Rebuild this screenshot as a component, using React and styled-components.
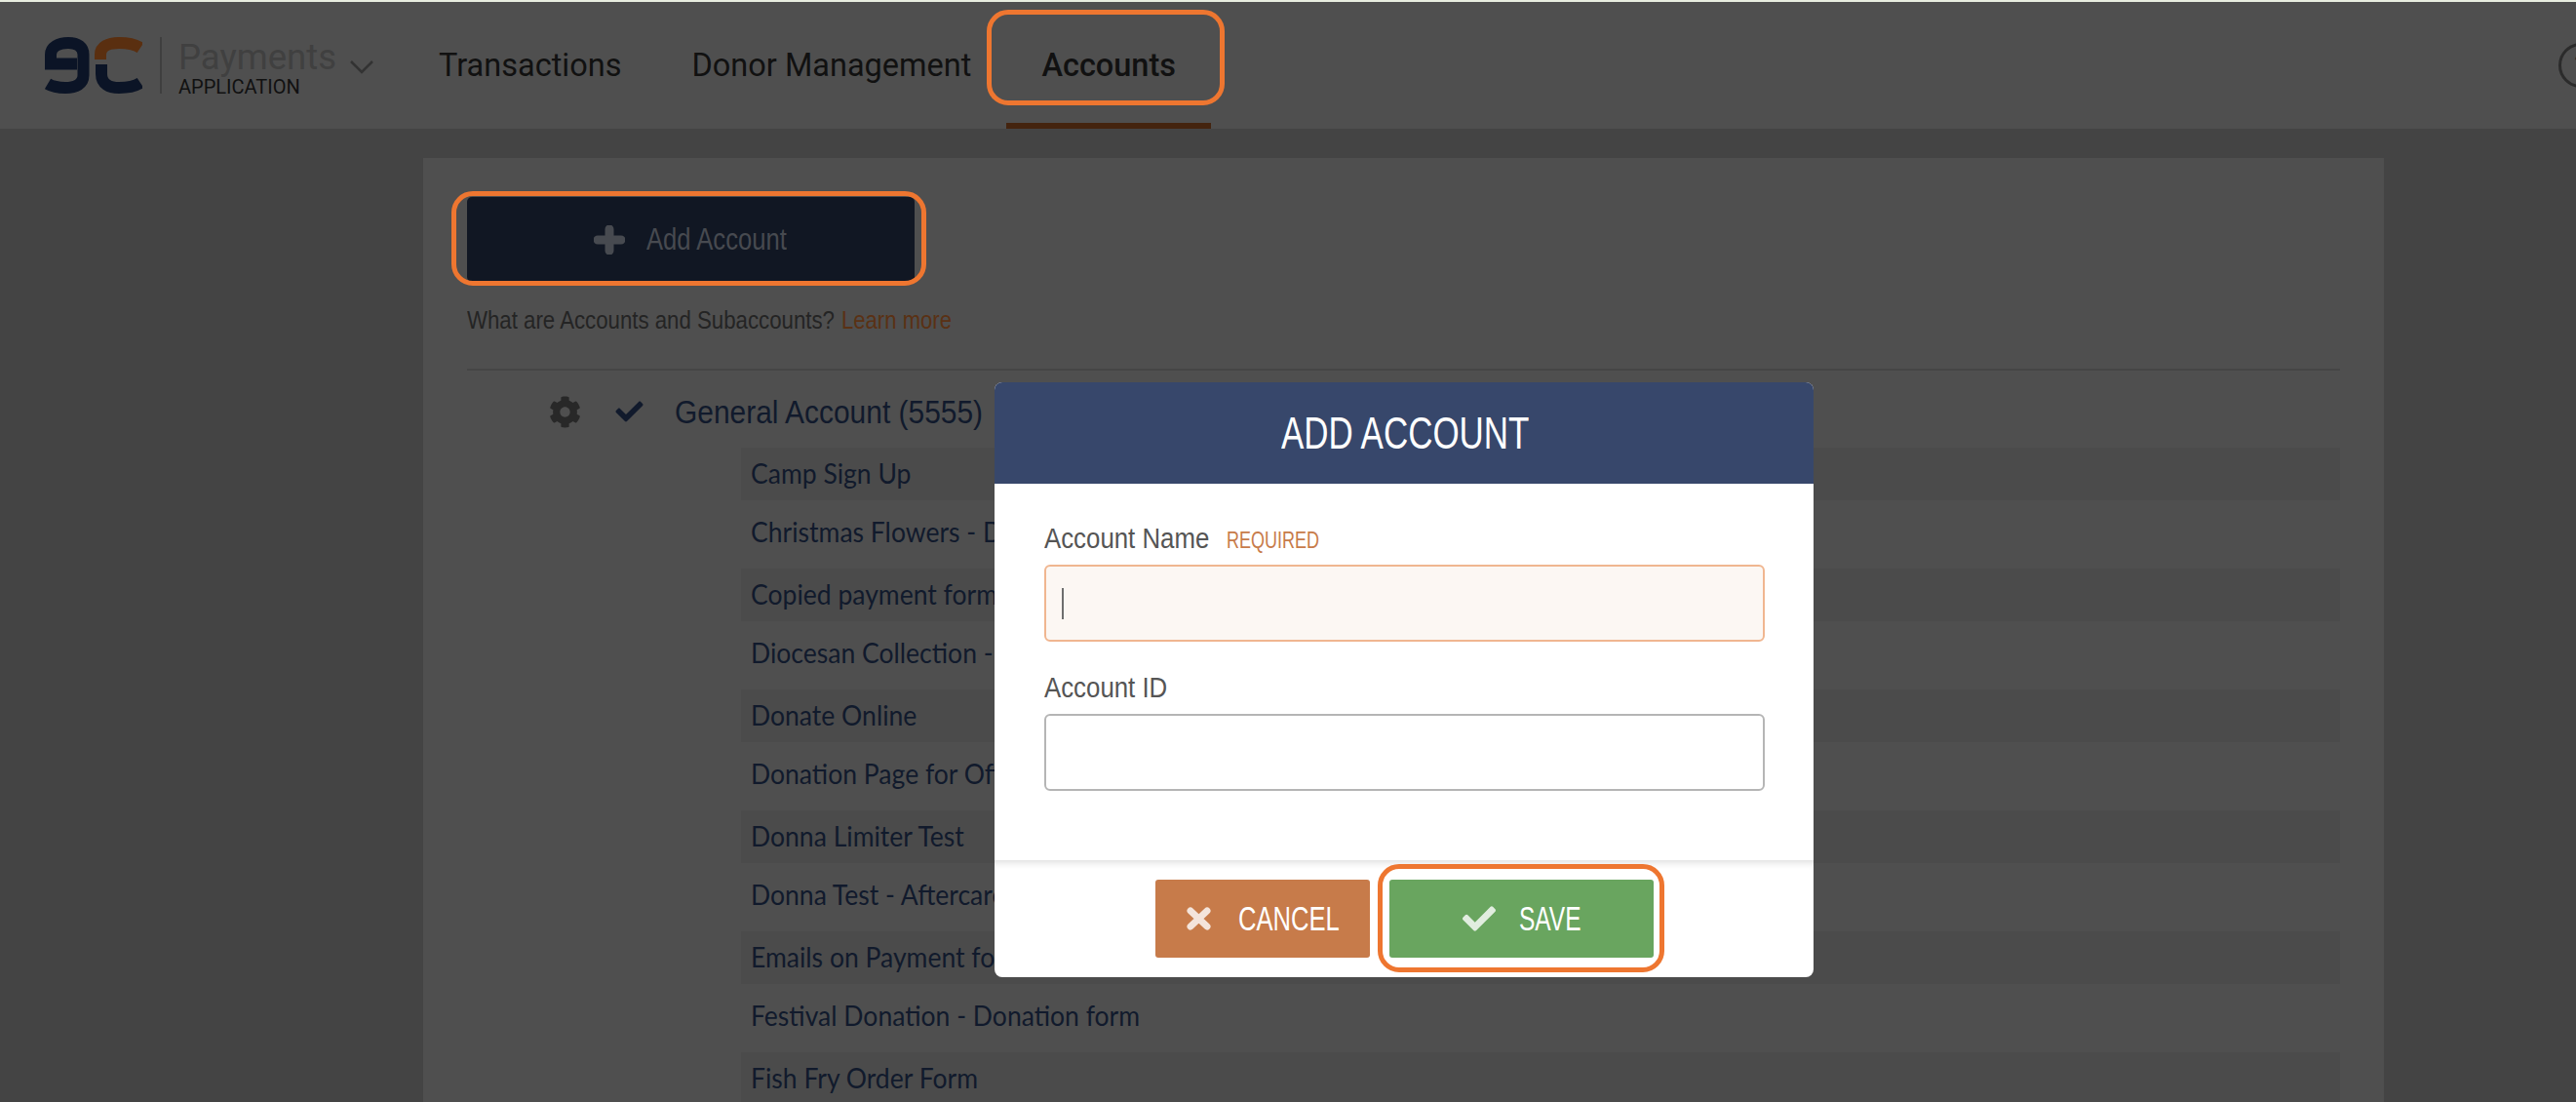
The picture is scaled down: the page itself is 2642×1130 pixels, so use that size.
import React from 'react';
import styled, { createGlobalStyle } from 'styled-components';
import { FaCheck, FaCog } from 'react-icons/fa';

const GlobalStyle = createGlobalStyle`
  html, body {
    margin: 0;
    padding: 0;
    background: #444444;
    overflow: hidden;
  }
  * {
    box-sizing: border-box;
  }
`;

const uiFont = `"Liberation Sans", sans-serif`;

// no condensed font is installed, so the DIN-like text is squeezed to its real width
const Squeeze = styled.span`
  display: inline-block;
  flex-shrink: 0;
  white-space: nowrap;
  width: ${p => (p.$w ? `${p.$w}px` : 'auto')};
  transform: scaleX(${p => p.$x});
  transform-origin: left center;
`;

const Page = styled.div`
  position: relative;
  width: 2642px;
  height: 1130px;
  overflow: hidden;
  border-top: 2px solid #e8ede0;
  background: #444444;
`;

const Header = styled.header`
  height: 130px;
  background: #4f4f4f;
  display: flex;
  align-items: stretch;
  padding-left: 46px;
`;

const Brand = styled.div`
  display: flex;
  align-items: center;
  width: 368px;
`;

const Divider = styled.div`
  width: 2px;
  height: 58px;
  margin: 0 17px 0 18px;
  background: #3f3f3f;
`;

const BrandText = styled.div`
  display: flex;
  flex-direction: column;
  margin-top: 6px;
  font-family: Roboto, sans-serif;
`;

const BrandName = styled.div`
  font-size: 36.5px;
  line-height: 38px;
  color: #404040;
`;

const BrandSub = styled.div`
  font-size: 20px;
  line-height: 22px;
  color: #111111;
`;

const Chevron = styled.svg`
  margin: 4px 0 0 14px;
`;

const Nav = styled.nav`
  display: flex;
  flex: 1;
`;

const NavItem = styled.div`
  font-family: Roboto, sans-serif;
  font-size: 32.5px;
  font-weight: ${p => (p.$active ? 500 : 400)};
  color: #111111;
  height: 130px;
  padding: 0 36px;
  display: flex;
  align-items: center;
  box-shadow: ${p => (p.$active ? 'inset 0 -6px 0 #44240f' : 'none')};
`;

const HelpCircle = styled.div`
  position: absolute;
  left: 2624px;
  top: 42px;
  width: 46px;
  height: 46px;
  border: 3px solid #2b2b2b;
  border-radius: 50%;
  font-family: Roboto, sans-serif;
  font-size: 30px;
  line-height: 40px;
  text-align: center;
  color: #2b2b2b;
`;

const Panel = styled.main`
  width: 2011px;
  height: 968px;
  margin: 30px 0 0 434px;
  padding: 40px 45px 0;
  background: #4f4f4f;
`;

const AddButton = styled.div`
  width: 459px;
  height: 87px;
  background: #111723;
  border-radius: 5px;
  display: flex;
  align-items: center;
  justify-content: center;
  gap: 22px;
  color: #474a50;
  font-family: ${uiFont};
  font-size: 32px;
`;

const HelpLine = styled.div`
  display: flex;
  gap: 8px;
  margin-top: 24px;
  font-family: ${uiFont};
  font-size: 26px;
  line-height: 30px;
  color: #242424;
  padding-bottom: 35px;
  border-bottom: 2px solid #454545;
`;

const LearnMore = styled(Squeeze)`
  color: #5a3114;
`;

const AccountRow = styled.div`
  height: 80px;
  display: flex;
  align-items: center;
  padding: 4px 0 0 84px;
  font-family: ${uiFont};
  font-size: 34px;
  color: #111a2c;
`;

const Gear = styled(FaCog)`
  width: 33px;
  height: 33px;
  color: #282828;
  margin-right: 33px;
`;

const Check = styled(FaCheck)`
  width: 33px;
  height: 28px;
  color: #111a2c;
  margin-right: 30px;
`;

const FormList = styled.div`
  margin-left: 281px;
  margin-top: -1px;
`;

const FormRow = styled.div`
  display: flex;
  align-items: center;
  height: ${p => (p.$striped ? 54 : 70)}px;
  padding: 0 10px ${p => (p.$striped ? 3 : 8)}px;
  background: ${p => (p.$striped ? '#4b4b4b' : 'transparent')};
  font-family: Lato, sans-serif;
  font-size: 29px;
  color: #111a2c;
`;

const Modal = styled.div`
  position: absolute;
  left: 1020px;
  top: 390px;
  width: 840px;
  height: 610px;
  border-radius: 8px;
  overflow: hidden;
  background: #ffffff;
  display: flex;
  flex-direction: column;
`;

const ModalTitle = styled.div`
  height: 104px;
  flex-shrink: 0;
  background: #37476b;
  color: #ffffff;
  display: flex;
  align-items: center;
  justify-content: center;
  font-family: ${uiFont};
  font-size: 46px;
`;

const ModalBody = styled.div`
  height: 386px;
  padding: 38px 50px 0 51px;
`;

const LabelRow = styled.div`
  display: flex;
  align-items: baseline;
  gap: 18px;
  height: 45px;
  font-family: ${uiFont};
  font-size: 29px;
  line-height: 36px;
  color: #555555;
`;

const Required = styled(Squeeze)`
  font-size: 24px;
  color: #c77b4a;
`;

const Field = styled.div`
  height: 79px;
  margin-bottom: 29px;
  padding: 0 16px;
  display: flex;
  align-items: center;
  border: 2px solid ${p => (p.$focus ? '#f0b690' : '#b5b5b5')};
  border-radius: 6px;
  background: ${p => (p.$focus ? '#fcf7f3' : '#ffffff')};
`;

const Caret = styled.div`
  width: 2px;
  height: 32px;
  background: #6e6e6e;
`;

const ModalFooter = styled.div`
  flex: 1;
  display: flex;
  justify-content: center;
  gap: 20px;
  padding-top: 20px;
  box-shadow: inset 0 7px 7px -4px rgba(0, 0, 0, 0.12);
`;

const ActionButton = styled.div`
  width: ${p => p.$width}px;
  height: 80px;
  border-radius: 3px;
  background: ${p => p.$bg};
  color: #ffffff;
  display: flex;
  align-items: center;
  justify-content: center;
  gap: ${p => p.$gap}px;
  font-family: ${uiFont};
  font-size: 35px;
  svg {
    color: rgba(255, 255, 255, 0.8);
  }
`;

const Callout = styled.div`
  position: absolute;
  left: ${p => p.$x}px;
  top: ${p => p.$y}px;
  width: ${p => p.$w}px;
  height: ${p => p.$h}px;
  border: 5px solid #ee7630;
  border-radius: 22px;
`;

const forms = [
  'Camp Sign Up',
  'Christmas Flowers - Donation form',
  'Copied payment form',
  'Diocesan Collection - Donation form',
  'Donate Online',
  'Donation Page for Offertory',
  'Donna Limiter Test',
  'Donna Test - Aftercare',
  'Emails on Payment form',
  'Festival Donation - Donation form',
  'Fish Fry Order Form',
];

function Logo() {
  return (
    <svg width="100" height="58" viewBox="0 0 100 58" fill="none">
      <path d="M33 27.5H6V18C6 10 14 6 24 6S39.5 10 39.5 18V39C39.5 48 32 52 21 52C14 52 8 51 3 48" stroke="#0b1426" strokeWidth="12" />
      <path d="M57 23V18C57 10 65 6 76 6C84 6 92 7 98 11" stroke="#5a2f10" strokeWidth="12" />
      <path d="M58 28V38C58 48 66 52 76 52C84 52 92 51 98 47" stroke="#0b1426" strokeWidth="12" />
    </svg>
  );
}

function PlusIcon() {
  return (
    <svg width="32" height="30" viewBox="0 0 32 30" fill="none">
      <path d="M16 4V26M4 15H28" stroke="#474a50" strokeWidth="9" strokeLinecap="round" />
    </svg>
  );
}

function CrossIcon() {
  return (
    <svg width="25" height="24" viewBox="0 0 25 24" fill="none">
      <path d="M4 4L21 20M21 4L4 20" stroke="currentColor" strokeWidth="7" strokeLinecap="round" />
    </svg>
  );
}

export default function App() {
  return (
    <Page>
      <GlobalStyle />
      <Header>
        <Brand>
          <Logo />
          <Divider />
          <BrandText>
            <BrandName>Payments</BrandName>
            <BrandSub>APPLICATION</BrandSub>
          </BrandText>
          <Chevron width="24" height="14" viewBox="0 0 24 14" fill="none">
            <path d="M1 1L12 12L23 1" stroke="#333333" strokeWidth="2.5" />
          </Chevron>
        </Brand>
        <Nav>
          <NavItem>Transactions</NavItem>
          <NavItem>Donor Management</NavItem>
          <NavItem $active>Accounts</NavItem>
        </Nav>
      </Header>
      <HelpCircle>?</HelpCircle>
      <Panel>
        <AddButton>
          <PlusIcon />
          <Squeeze $x={0.8} $w={145}>Add Account</Squeeze>
        </AddButton>
        <HelpLine>
          <Squeeze $x={0.855} $w={376}>What are Accounts and Subaccounts?</Squeeze>
          <LearnMore $x={0.85} $w={113}>Learn more</LearnMore>
        </HelpLine>
        <AccountRow>
          <Gear />
          <Check />
          <Squeeze $x={0.88} $w={315}>General Account (5555)</Squeeze>
        </AccountRow>
        <FormList>
          {forms.map((name, i) => (
            <FormRow key={name} $striped={i % 2 === 0}>
              <Squeeze $x={0.915}>{name}</Squeeze>
            </FormRow>
          ))}
        </FormList>
      </Panel>
      <Modal>
        <ModalTitle>
          <Squeeze $x={0.76} $w={253}>ADD ACCOUNT</Squeeze>
        </ModalTitle>
        <ModalBody>
          <LabelRow>
            <Squeeze $x={0.89} $w={169}>Account Name</Squeeze>
            <Required $x={0.75} $w={94}>REQUIRED</Required>
          </LabelRow>
          <Field $focus>
            <Caret />
          </Field>
          <LabelRow>
            <Squeeze $x={0.89} $w={125}>Account ID</Squeeze>
          </LabelRow>
          <Field />
        </ModalBody>
        <ModalFooter>
          <ActionButton $bg="#c77b4a" $width={220} $gap={28}>
            <CrossIcon />
            <Squeeze $x={0.73} $w={102}>CANCEL</Squeeze>
          </ActionButton>
          <ActionButton $bg="#69a55f" $width={271} $gap={24}>
            <FaCheck size={34} />
            <Squeeze $x={0.7} $w={62}>SAVE</Squeeze>
          </ActionButton>
        </ModalFooter>
      </Modal>
      <Callout $x={1012} $y={8} $w={244} $h={98} />
      <Callout $x={463} $y={194} $w={487} $h={97} />
      <Callout $x={1413} $y={884} $w={294} $h={111} />
    </Page>
  );
}
